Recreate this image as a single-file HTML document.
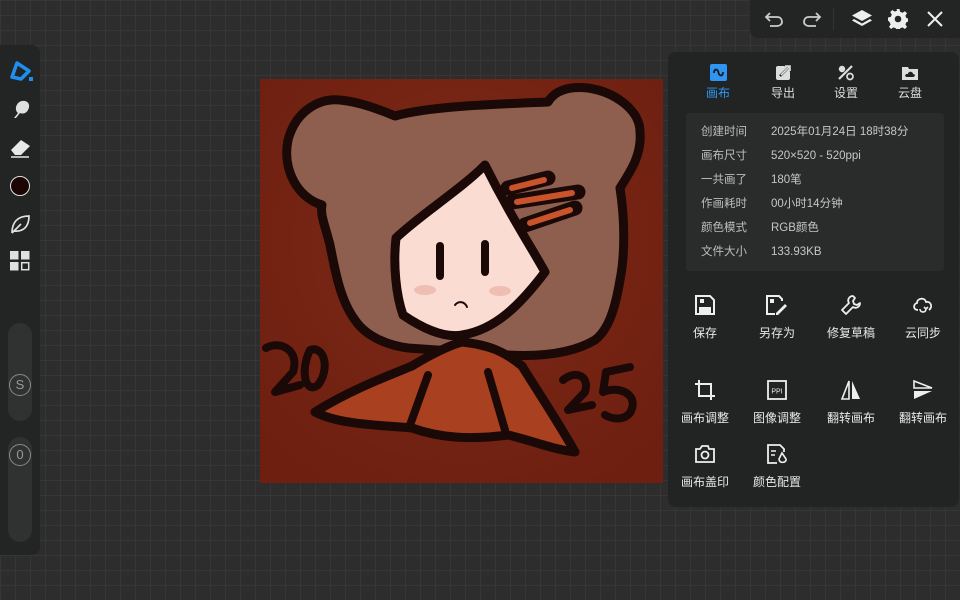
<!DOCTYPE html>
<html><head><meta charset="utf-8">
<style>
*{margin:0;padding:0;box-sizing:border-box}
body{width:960px;height:600px;overflow:hidden;position:relative;background:#2d2d2d;
background-image:linear-gradient(#363636 1px,transparent 1px),linear-gradient(90deg,#363636 1px,transparent 1px);
background-size:15px 15px;font-family:"Liberation Sans","Noto Sans CJK SC",sans-serif;color:#d8d8d8}
.abs{position:absolute}
#left{left:0;top:45px;width:40px;height:510px;background:#232524;border-radius:0 8px 8px 0}
.slider{position:absolute;left:8px;width:24px;background:#2f3230;border-radius:12px}
.knob{position:absolute;left:9px;width:22px;height:22px;border:1.5px solid #8a8a8a;border-radius:50%;color:#9a9a9a;font-size:13px;text-align:center;line-height:19px}
#top{left:750px;top:0;width:210px;height:38px;background:#232524;border-radius:0 0 0 8px}
#panel{left:668px;top:52px;width:291px;height:455px;background:#222423;border-radius:8px}
#info{left:686px;top:113px;width:258px;height:158px;background:#2a2c2b;border-radius:3px;font-size:11.5px}
.row{position:absolute;left:15px;color:#bdbdbd;line-height:14px;width:230px}
.row span{position:absolute;left:70px;top:0;white-space:nowrap;color:#c6c6c6}
.tab{position:absolute;width:60px;text-align:center;font-size:12px;color:#ddd}
.tab svg{display:block;margin:0 auto 3px}
.btn{position:absolute;width:70px;text-align:center;font-size:12px;color:#e8e8e8}
.btn svg{display:block;margin:0 auto 8px}
</style></head><body>

<svg class="abs" style="left:0;top:0" width="960" height="600">
<defs><radialGradient id="bg" cx="0.5" cy="0.4" r="0.7"><stop offset="0" stop-color="#7e2a18"/><stop offset="1" stop-color="#6e1f10"/></radialGradient></defs>
<rect x="260" y="79" width="403" height="404" fill="url(#bg)"/>
<g stroke="#1a0906" stroke-width="9" stroke-linejoin="round" stroke-linecap="round">
<path d="M408,348 C385,345 365,335 355,320 C340,300 335,270 330,245 C325,225 320,215 322,205 C298,198 282,170 288,140 C296,110 320,98 340,100 C362,102 385,112 395,116 C430,106 500,104 548,102 C555,90 570,86 588,88 C615,92 640,110 640,132 C642,155 630,172 620,188 C625,220 625,255 620,280 C615,310 608,330 595,340 C575,352 545,357 508,355 Z" fill="#8e5e4e"/>
<path d="M485,165 C460,190 420,215 396,238 C393,265 396,295 403,315 C425,330 445,338 462,335 C495,330 520,305 545,272 C530,245 510,215 485,165 Z" fill="#fbdcd3"/>
<path d="M508,188 L548,178 M512,202 L578,192 M525,225 L575,208" stroke-width="15"/>
<path d="M315,412 C350,390 390,375 412,366 C430,355 450,345 462,342 C490,345 505,352 522,366 C540,395 560,425 575,452 C555,450 530,440 508,435 C470,440 440,438 412,428 C380,425 340,425 315,412 Z" fill="#a9401f"/>
<path d="M428,375 L410,425 M488,372 L505,430" stroke-width="8"/>
<path d="M440,246 L440,276 M485,244 L485,272" stroke-width="8"/>
<path d="M455,305 C459,300 465,302 467,307" stroke-width="2" fill="none"/>
<path d="M266,348 C280,340 300,350 293,372 L275,392 L300,385 M310,350 C325,345 330,370 318,385 C305,395 300,370 310,350 Z M563,380 C575,370 590,375 585,392 L568,410 L592,405 M630,367 L606,372 L603,392 C620,385 640,395 630,413 C622,422 610,418 605,415" fill="none" stroke-width="8"/>
</g>
<g stroke="#c9532b" stroke-width="6" stroke-linecap="round"><path d="M512,188 L544,180 M517,202 L572,193 M530,223 L570,210"/></g>
<ellipse cx="425" cy="290" rx="11" ry="5" fill="#e9b0a5" opacity=".7"/>
<ellipse cx="500" cy="291" rx="11" ry="5" fill="#e9b0a5" opacity=".7"/>
</svg>

<div id="left" class="abs">
<svg class="abs" style="left:9px;top:14px" width="24" height="24"><path d="M3,18 L8,4 L20,12 L12,20 Z" fill="none" stroke="#1e8ff0" stroke-width="3.5" stroke-linejoin="round"/><rect x="20" y="18" width="4" height="4" fill="#1e8ff0"/></svg>
<svg class="abs" style="left:10px;top:53px" width="22" height="22"><path d="M4,20 L8,15 C4,12 6,4 12,3 C18,2 21,7 18,12 C16,16 12,16 10,15 L6,20 Z" fill="#e0e0e0"/></svg>
<svg class="abs" style="left:9px;top:92px" width="24" height="22"><path d="M2,13 L12,3 L21,9 L12,18 L6,18 Z" fill="#e8e8e8"/><path d="M2,20 L20,20" stroke="#e8e8e8" stroke-width="1.5"/></svg>
<div class="abs" style="left:10px;top:131px;width:20px;height:20px;border-radius:50%;background:#1c0604;border:1.5px solid #e0e0e0"></div>
<svg class="abs" style="left:9px;top:168px" width="22" height="22"><path d="M3,20 C3,10 8,3 20,3 C20,14 14,19 5,18 M3,20 L12,11" fill="none" stroke="#e0e0e0" stroke-width="1.7"/></svg>
<svg class="abs" style="left:10px;top:206px" width="20" height="20"><rect x="0" y="0" width="8.5" height="8.5" fill="#e0e0e0"/><rect x="11" y="0" width="8.5" height="8.5" fill="#e0e0e0"/><rect x="0" y="11" width="8.5" height="8.5" fill="#e0e0e0"/><rect x="11.7" y="11.7" width="7" height="7" fill="none" stroke="#e0e0e0" stroke-width="1.5"/></svg>
<div class="slider" style="top:278px;height:98px"></div>
<div class="knob" style="top:329px">S</div>
<div class="slider" style="top:392px;height:105px"></div>
<div class="knob" style="top:399px">0</div>
</div>

<div id="top" class="abs">
<svg class="abs" style="left:14px;top:10px" width="20" height="18"><path d="M6,3 L2,7 L6,11 M2,7 L13,7 C17,7 18,10 18,12 C18,14 16,16 13,16 L6,16" fill="none" stroke="#ccc" stroke-width="1.8"/></svg>
<svg class="abs" style="left:52px;top:10px" width="20" height="18"><path d="M14,3 L18,7 L14,11 M18,7 L7,7 C3,7 2,10 2,12 C2,14 4,16 7,16 L14,16" fill="none" stroke="#ccc" stroke-width="1.8"/></svg>
<div class="abs" style="left:83px;top:8px;width:1px;height:22px;background:#333"></div>
<svg class="abs" style="left:101px;top:9px" width="22" height="20"><path d="M11,1 L21,6.5 L11,12 L1,6.5 Z" fill="#eee"/><path d="M3,10 L11,14.5 L19,10 L21,11.5 L11,17 L1,11.5 Z" fill="#eee"/></svg>
<svg class="abs" style="left:138px;top:9px" width="20" height="20" viewBox="0 0 20 20"><path d="M8.5,0 h3 l.6,2.8 2.4,1 2.4-1.6 2.1,2.1-1.6,2.4 1,2.4 2.6,.4v3l-2.6,.6-1,2.4 1.6,2.4-2.1,2.1-2.4-1.6-2.4,1-.6,2.6h-3l-.6-2.6-2.4-1-2.4,1.6-2.1-2.1 1.6-2.4-1-2.4L0,11.5v-3l2.8-.6 1-2.4L2.2,3.1 4.3,1 6.7,2.6l2.4-1Z" fill="#eee"/><circle cx="10" cy="10" r="3.3" fill="#232524"/></svg>
<svg class="abs" style="left:176px;top:10px" width="18" height="18"><path d="M2,2 L16,16 M16,2 L2,16" stroke="#eee" stroke-width="2"/></svg>
</div>

<div id="panel" class="abs">
<div class="tab" style="left:20px;top:12px;color:#2f95f2"><svg width="17" height="17"><rect width="17" height="17" rx="2" fill="#2f95f2"/><path d="M4,9 C4,4 8,5 8.5,8.5 C9,12 13,13 13,8" stroke="#1a1a1a" stroke-width="1.8" fill="none"/></svg>画布</div>
<div class="tab" style="left:85px;top:12px"><svg width="17" height="17"><rect x="1" y="2" width="14" height="14" rx="2" fill="#ddd"/><path d="M5,12 L15,2 M9,1 L16,1 L16,8" stroke="#222" stroke-width="2.4" fill="none"/><path d="M6,11 L15,2 M10,2 L15,2 L15,7" stroke="#ddd" stroke-width="1.6" fill="none"/></svg>导出</div>
<div class="tab" style="left:148px;top:12px"><svg width="18" height="17"><path d="M2,15 L15,2" stroke="#ddd" stroke-width="2.2"/><circle cx="5" cy="5" r="3.2" fill="#ddd"/><circle cx="13" cy="12.5" r="3" fill="none" stroke="#ddd" stroke-width="1.7"/></svg>设置</div>
<div class="tab" style="left:212px;top:12px"><svg width="18" height="17"><path d="M1,3 L7,3 L8,5 L17,5 L17,16 L1,16 Z" fill="#ddd"/><path d="M6,13 C3,13 4,9 7,10 C7,7 12,7 12,10 C15,10 14,13 12,13 Z" fill="#222"/></svg>云盘</div>
</div>

<div id="info" class="abs">
<div class="row" style="top:12px">创建时间<span>2025年01月24日 18时38分</span></div>
<div class="row" style="top:36px">画布尺寸<span>520×520 - 520ppi</span></div>
<div class="row" style="top:60px">一共画了<span>180笔</span></div>
<div class="row" style="top:84px">作画耗时<span>00小时14分钟</span></div>
<div class="row" style="top:108px">颜色模式<span>RGB颜色</span></div>
<div class="row" style="top:132px">文件大小<span>133.93KB</span></div>
</div>

<div class="abs" style="left:668px;top:0">
<div class="btn" style="left:2px;top:294px"><svg width="22" height="22"><path d="M2,2 H16 L20,6 V20 H2 Z" fill="none" stroke="#eee" stroke-width="2"/><rect x="6" y="5" width="4" height="4" fill="#eee"/><rect x="5" y="13" width="12" height="6" fill="#eee"/></svg>保存</div>
<div class="btn" style="left:74px;top:294px"><svg width="24" height="22"><path d="M10,20 H2 V2 H14 L17,5 V7" fill="none" stroke="#eee" stroke-width="2"/><rect x="5" y="5" width="4" height="4" fill="#eee"/><path d="M11,19 L20,10 L22,12 L13,21 L11,21 Z" fill="#eee"/></svg>另存为</div>
<div class="btn" style="left:148px;top:294px"><svg width="22" height="22"><path d="M13,2 C9,2 7,6 9,9 L2,16 L6,20 L13,13 C16,15 20,13 20,9 L17,11 L14,10 L13,7 L15,4 Z" fill="none" stroke="#eee" stroke-width="1.8" stroke-linejoin="round"/></svg>修复草稿</div>
<div class="btn" style="left:220px;top:294px"><svg width="24" height="22"><path d="M7,16 C2,16 2,10 6,9 C6,4 14,3 15,8 C20,7 22,13 18,16" fill="none" stroke="#eee" stroke-width="1.8"/><path d="M9,15 C9,19 15,19 15,15 M13,13 L15,15 L17,13" fill="none" stroke="#eee" stroke-width="1.6"/></svg>云同步</div>
<div class="btn" style="left:2px;top:379px"><svg width="22" height="22"><path d="M5,1 V17 H21 M1,5 H17 V21" fill="none" stroke="#eee" stroke-width="2"/></svg>画布调整</div>
<div class="btn" style="left:74px;top:379px"><svg width="22" height="22"><rect x="2" y="2" width="18" height="18" fill="none" stroke="#eee" stroke-width="1.8"/><text x="11" y="14.5" font-size="7" fill="#eee" text-anchor="middle" font-family="Liberation Sans">PPI</text></svg>图像调整</div>
<div class="btn" style="left:148px;top:379px"><svg width="22" height="22"><path d="M9,2 L9,20 L2,20 Z" fill="none" stroke="#eee" stroke-width="1.6"/><path d="M12,2 L20,20 L12,20 Z" fill="#eee"/></svg>翻转画布</div>
<div class="btn" style="left:220px;top:379px"><svg width="22" height="22"><path d="M2,2 L20,9 L2,9 Z" fill="none" stroke="#eee" stroke-width="1.6"/><path d="M2,12 L20,12 L2,20 Z" fill="#eee"/></svg>翻转画布</div>
<div class="btn" style="left:2px;top:443px"><svg width="22" height="22"><path d="M2,6 H6 L8,3 H14 L15,6 H20 V19 H2 Z" fill="none" stroke="#eee" stroke-width="1.8"/><circle cx="11" cy="12" r="3.5" fill="none" stroke="#eee" stroke-width="1.8"/></svg>画布盖印</div>
<div class="btn" style="left:74px;top:443px"><svg width="22" height="22"><path d="M11,20 H2 V2 H14 L18,6 V9" fill="none" stroke="#eee" stroke-width="1.8"/><path d="M5,8 H10 M5,12 H9" stroke="#eee" stroke-width="1.6"/><path d="M16,10 L20,16 C21,20 13,21 13,16 Z" fill="none" stroke="#eee" stroke-width="1.6"/></svg>颜色配置</div>
</div>
</body></html>
